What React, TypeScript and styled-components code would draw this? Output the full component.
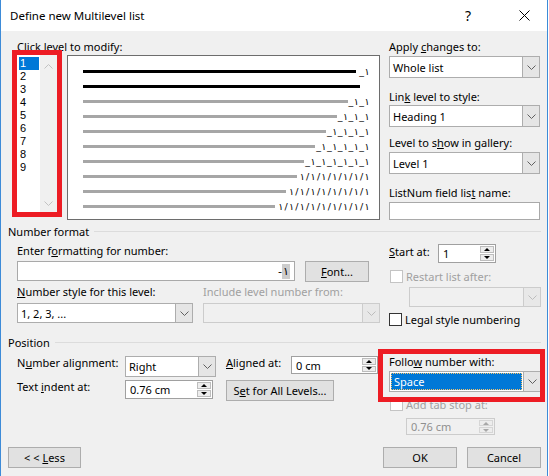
import styled, { createGlobalStyle } from "styled-components";

const GlobalStyle = createGlobalStyle`
  html, body {
    margin: 0;
    padding: 0;
    background: #ffffff;
  }
  body {
    font-family: "Segoe UI", "Noto Sans", "Open Sans", sans-serif;
    font-size: 11px;
    color: #000;
  }
  * {
    box-sizing: border-box;
  }
`;

const Window = styled.div`
  position: relative;
  width: 548px;
  height: 476px;
  border-left: 1px solid #3d8bd8;
  border-right: 1px solid #3d8bd8;
  background: #f0f0f0;
  overflow: hidden;
`;

const TitleBar = styled.div`
  display: flex;
  align-items: center;
  height: 31px;
  background: #ffffff;
  padding-left: 9px;
`;

const Title = styled.div`
  flex: 1;
  font-size: 11.5px;
`;

const CaptionButton = styled.div<{ $mr?: number }>`
  width: 46px;
  height: 31px;
  margin-right: ${(p) => p.$mr ?? 0}px;
  display: flex;
  align-items: center;
  justify-content: center;
  font-size: 14px;
`;

const TopSection = styled.div`
  display: grid;
  grid-template-columns: 368px 151px;
  column-gap: 9px;
  padding: 3px 0 0 11px;
`;

const Column = styled.div`
  display: flex;
  flex-direction: column;
  align-items: flex-start;
`;

const Label = styled.div<{ $mt?: number; $ml?: number; $w?: number; $disabled?: boolean }>`
  height: 13px;
  line-height: 13px;
  white-space: nowrap;
  margin-top: ${(p) => p.$mt ?? 0}px;
  margin-left: ${(p) => p.$ml ?? 0}px;
  width: ${(p) => (p.$w ? `${p.$w}px` : "auto")};
  flex-shrink: 0;
  color: ${(p) => (p.$disabled ? "#a0a0a0" : "#000")};
`;

const ClickLabel = styled(Label)`
  height: 10px;
`;

const LevelRow = styled.div`
  display: flex;
  align-items: flex-start;
  gap: 5px;
`;

const RedFrame = styled.div`
  width: 50px;
  height: 167px;
  border: 5px solid #ed1c24;
  display: flex;
  background: #fff;
`;

const LevelItems = styled.div`
  width: 23px;
  padding-top: 2px;
`;

const LevelItem = styled.div<{ $selected?: boolean }>`
  height: 13px;
  line-height: 13px;
  font-family: "Liberation Sans", Arial, sans-serif;
  font-size: 11px;
  margin-left: 2px;
  width: 20px;
  padding-left: 1px;
  background: ${(p) => (p.$selected ? "#0078d7" : "transparent")};
  color: ${(p) => (p.$selected ? "#fff" : "#000")};
`;

const ScrollTrack = styled.div`
  width: 17px;
  background: #f0f0f0;
  display: flex;
  flex-direction: column;
  align-items: center;
  justify-content: space-between;
  padding: 9px 0 6px;
`;

const Preview = styled.div`
  margin-top: 5px;
  width: 313px;
  height: 165px;
  border: 1px solid #6d6d6d;
  background: #fff;
  padding: 8px 9px 0 15px;
  display: flex;
  flex-direction: column;
`;

const PreviewRow = styled.div`
  height: 15px;
  display: flex;
  align-items: center;
  justify-content: space-between;
`;

const PreviewLine = styled.div<{ $dark: boolean }>`
  height: 3px;
  background: ${(p) => (p.$dark ? "#000" : "#a6a6a6")};
`;

const PreviewNum = styled.div`
  display: flex;
  height: 15px;
  align-items: center;
`;

const Glyph = styled.span<{ $w: number }>`
  display: inline-block;
  width: ${(p) => p.$w}px;
  text-align: center;
  font-family: "DejaVu Sans", sans-serif;
  font-size: 9.5px;
  line-height: 12px;
`;

const ComboBox = styled.div<{ $w: number; $h?: number; $mt?: number; $ml?: number; $disabled?: boolean }>`
  display: flex;
  flex-shrink: 0;
  width: ${(p) => p.$w}px;
  height: ${(p) => p.$h ?? 21}px;
  margin-top: ${(p) => p.$mt ?? 0}px;
  margin-left: ${(p) => p.$ml ?? 0}px;
  border: 1px solid ${(p) => (p.$disabled ? "#cccccc" : "#adadad")};
  background: ${(p) => (p.$disabled ? "#f0f0f0" : "#fff")};
`;

const ComboText = styled.div<{ $selected?: boolean }>`
  flex: 1;
  display: flex;
  align-items: center;
  padding-left: 3px;
  margin: ${(p) => (p.$selected ? "1px" : "0")};
  background: ${(p) => (p.$selected ? "#0078d7" : "transparent")};
  color: ${(p) => (p.$selected ? "#fff" : "#000")};
  outline: ${(p) => (p.$selected ? "1px dotted #f5c26b" : "none")};
  outline-offset: -1px;
  white-space: nowrap;
`;

const ComboArrow = styled.div<{ $disabled?: boolean }>`
  width: 17px;
  display: flex;
  align-items: center;
  justify-content: center;
  border-left: 1px solid ${(p) => (p.$disabled ? "#cccccc" : "#adadad")};
  background: ${(p) => (p.$disabled ? "#e8e8e8" : "#e5e5e5")};
`;

const TextBox = styled.div<{ $w: number; $h: number; $mt?: number }>`
  width: ${(p) => p.$w}px;
  height: ${(p) => p.$h}px;
  margin-top: ${(p) => p.$mt ?? 0}px;
  border: 1px solid #a9a9a9;
  background: #fff;
  display: flex;
  align-items: center;
  justify-content: flex-end;
  padding-right: 4px;
`;

const FormatText = styled.span`
  font-family: "DejaVu Sans", sans-serif;
  font-size: 11px;
  direction: ltr;
  unicode-bidi: bidi-override;
`;

const Marked = styled.span`
  background: #cccccc;
  padding: 1px 1px;
`;

const SpinBox = styled.div<{ $w: number; $h: number; $mt?: number; $ml?: number; $disabled?: boolean }>`
  display: flex;
  flex-shrink: 0;
  width: ${(p) => p.$w}px;
  height: ${(p) => p.$h}px;
  margin-top: ${(p) => p.$mt ?? 0}px;
  margin-left: ${(p) => p.$ml ?? 0}px;
  border: 1px solid ${(p) => (p.$disabled ? "#cccccc" : "#a0a0a0")};
  background: ${(p) => (p.$disabled ? "#f0f0f0" : "#fff")};
  color: ${(p) => (p.$disabled ? "#8f8f8f" : "#000")};
`;

const SpinValue = styled.div`
  flex: 1;
  display: flex;
  align-items: center;
  padding-left: 4px;
  white-space: nowrap;
`;

const SpinButtons = styled.div`
  width: 16px;
  display: flex;
  flex-direction: column;
  padding: 1px;
  gap: 1px;
`;

const SpinButton = styled.div<{ $disabled?: boolean }>`
  flex: 1;
  display: flex;
  align-items: center;
  justify-content: center;
  background: #ededed;
  border: 1px solid ${(p) => (p.$disabled ? "#d6d6d6" : "#bdbdbd")};
`;

const Triangle = styled.div<{ $down?: boolean; $disabled?: boolean }>`
  width: 0;
  height: 0;
  border-left: 3.5px solid transparent;
  border-right: 3.5px solid transparent;
  ${(p) =>
    p.$down
      ? `border-top: 3px solid ${p.$disabled ? "#a8a8a8" : "#000"};`
      : `border-bottom: 3px solid ${p.$disabled ? "#a8a8a8" : "#000"};`}
`;

const Button = styled.button<{ $w: number; $h?: number }>`
  width: ${(p) => p.$w}px;
  height: ${(p) => p.$h ?? 21}px;
  flex-shrink: 0;
  border: 1px solid #adadad;
  background: #e1e1e1;
  font: inherit;
  font-size: 11px;
  color: #000;
  padding: 0;
  white-space: nowrap;
`;

const CheckRow = styled.div<{ $mt?: number; $ml?: number }>`
  display: flex;
  align-items: center;
  gap: 3px;
  height: 13px;
  margin-top: ${(p) => p.$mt ?? 0}px;
  margin-left: ${(p) => p.$ml ?? 0}px;
`;

const CheckBox = styled.div<{ $disabled?: boolean }>`
  width: 13px;
  height: 13px;
  border: 1px solid ${(p) => (p.$disabled ? "#c4c4c4" : "#333333")};
  background: #fff;
  flex-shrink: 0;
`;

const GroupHeader = styled.div<{ $mt: number }>`
  display: flex;
  align-items: center;
  gap: 5px;
  height: 16px;
  margin-top: ${(p) => p.$mt}px;
  padding: 0 6px 0 7px;
  white-space: nowrap;
`;

const GroupLine = styled.div`
  flex: 1;
  height: 1px;
  background: #dcdcdc;
`;

const SectionGrid = styled.div`
  display: grid;
  grid-template-columns: 363px 151px;
  column-gap: 9px;
  padding-left: 16px;
  align-items: start;
`;

const Row = styled.div<{ $mt?: number; $gap?: number }>`
  display: flex;
  align-items: flex-start;
  gap: ${(p) => p.$gap ?? 0}px;
  margin-top: ${(p) => p.$mt ?? 0}px;
`;

const FieldPair = styled.div`
  display: grid;
  grid-template-columns: 176px 177px;
  column-gap: 10px;
  margin-top: 3px;
`;

const PositionGrid = styled.div`
  display: grid;
  grid-template-columns: 108px 101px 65px 87px;
  row-gap: 3px;
  align-items: start;
  margin-top: 6px;
`;

const SpanTwo = styled.div`
  grid-column: 3 / span 2;
`;

const Footer = styled.div`
  display: flex;
  justify-content: space-between;
  margin-top: 12px;
  padding: 0 6px 0 7px;
`;

const FooterGroup = styled.div`
  display: flex;
  gap: 10px;
`;

const RedOverlay = styled.div`
  position: absolute;
  left: 377px;
  top: 349px;
  width: 167px;
  height: 53px;
  border: 5px solid #ed1c24;
  pointer-events: none;
`;

function Chevron({ up, color }: { up?: boolean; color: string }) {
  return (
    <svg width="9" height="5" viewBox="0 0 9 5">
      <polyline
        points={up ? "0.5,4.5 4.5,0.5 8.5,4.5" : "0.5,0.5 4.5,4.5 8.5,0.5"}
        fill="none"
        stroke={color}
        strokeWidth="1"
      />
    </svg>
  );
}

interface ComboProps {
  w: number;
  h?: number;
  mt?: number;
  ml?: number;
  value?: string;
  disabled?: boolean;
  selected?: boolean;
}

function Combo({ w, h, mt, ml, value, disabled, selected }: ComboProps) {
  return (
    <ComboBox $w={w} $h={h} $mt={mt} $ml={ml} $disabled={disabled}>
      <ComboText $selected={selected}>{value}</ComboText>
      <ComboArrow $disabled={disabled}>
        <Chevron color={disabled ? "#bcbcbc" : "#606060"} />
      </ComboArrow>
    </ComboBox>
  );
}

interface SpinProps {
  w: number;
  h: number;
  mt?: number;
  ml?: number;
  value: string;
  disabled?: boolean;
}

function Spin({ w, h, mt, ml, value, disabled }: SpinProps) {
  return (
    <SpinBox $w={w} $h={h} $mt={mt} $ml={ml} $disabled={disabled}>
      <SpinValue>{value}</SpinValue>
      <SpinButtons>
        <SpinButton $disabled={disabled}>
          <Triangle $disabled={disabled} />
        </SpinButton>
        <SpinButton $disabled={disabled}>
          <Triangle $down $disabled={disabled} />
        </SpinButton>
      </SpinButtons>
    </SpinBox>
  );
}

// number as drawn in the preview: "_١" pairs, or "١/١/..." for the deep levels
function levelNumber(depth: number): string[] {
  if (depth === 0) return [];
  if (depth < 7) return Array.from({ length: depth }, () => ["_", "١"]).flat();
  const out: string[] = [];
  for (let i = 0; i < depth; i++) {
    if (i > 0) out.push("/");
    out.push("١");
  }
  return out;
}

const glyphWidth = (g: string) => (g === "١" ? 5.8 : 5);

const levels = ["1", "2", "3", "4", "5", "6", "7", "8", "9"];

const previewRows = [
  { w: 273, dark: true, depth: 1 },
  { w: 277, dark: true, depth: 0 },
  { w: 265, dark: false, depth: 2 },
  { w: 254, dark: false, depth: 3 },
  { w: 243, dark: false, depth: 4 },
  { w: 232, dark: false, depth: 5 },
  { w: 221, dark: false, depth: 6 },
  { w: 214, dark: false, depth: 7 },
  { w: 203, dark: false, depth: 8 },
  { w: 192, dark: false, depth: 9 },
];

export default function App() {
  return (
    <>
      <GlobalStyle />
      <Window>
        <TitleBar>
          <Title>Define new Multilevel list</Title>
          <CaptionButton $mr={10}>?</CaptionButton>
          <CaptionButton>
            <svg width="11" height="11" viewBox="0 0 11 11">
              <path d="M0.5 0.5 L10.5 10.5 M10.5 0.5 L0.5 10.5" stroke="#000" strokeWidth="1" />
            </svg>
          </CaptionButton>
        </TitleBar>

        <TopSection>
          <Column>
            <ClickLabel $mt={6} $ml={5}>
              Click level to modify:
            </ClickLabel>
            <LevelRow>
              <RedFrame>
                <LevelItems>
                  {levels.map((l, i) => (
                    <LevelItem key={l} $selected={i === 0}>
                      {l}
                    </LevelItem>
                  ))}
                </LevelItems>
                <ScrollTrack>
                  <Chevron up color="#c2c2c2" />
                  <Chevron color="#c2c2c2" />
                </ScrollTrack>
              </RedFrame>
              <Preview>
                {previewRows.map((r, i) => (
                  <PreviewRow key={i}>
                    <PreviewLine $dark={r.dark} style={{ width: r.w }} />
                    {r.depth > 0 && (
                      <PreviewNum>
                        {levelNumber(r.depth).map((g, j) => (
                          <Glyph key={j} $w={glyphWidth(g)}>
                            {g}
                          </Glyph>
                        ))}
                      </PreviewNum>
                    )}
                  </PreviewRow>
                ))}
              </Preview>
            </LevelRow>
          </Column>

          <Column>
            <Label $mt={6}>
              Apply <u>c</u>hanges to:
            </Label>
            <Combo w={151} h={22} mt={3} value="Whole list" />
            <Label $mt={12}>
              Lin<u>k</u> level to style:
            </Label>
            <Combo w={151} h={22} mt={2} value="Heading 1" />
            <Label $mt={9}>
              Level to s<u>h</u>ow in gallery:
            </Label>
            <Combo w={151} h={22} mt={3} value="Level 1" />
            <Label $mt={12}>
              ListNum field lis<u>t</u> name:
            </Label>
            <TextBox $w={151} $h={18} $mt={3} />
          </Column>
        </TopSection>

        <GroupHeader $mt={3}>
          Number format
          <GroupLine />
        </GroupHeader>

        <SectionGrid>
          <Column>
            <Label $mt={5}>
              Enter f<u>o</u>rmatting for number:
            </Label>
            <Row $mt={4} $gap={10}>
              <TextBox $w={278} $h={20}>
                <FormatText>
                  -<Marked>١</Marked>
                </FormatText>
              </TextBox>
              <Button $w={64}>
                <u>F</u>ont...
              </Button>
            </Row>
            <FieldPair>
              <Column>
                <Label>
                  <u>N</u>umber style for this level:
                </Label>
                <Combo w={176} h={20} mt={5} value="1, 2, 3, ..." />
              </Column>
              <Column>
                <Label $disabled>Include level number from:</Label>
                <Combo w={177} h={20} mt={5} disabled />
              </Column>
            </FieldPair>
          </Column>

          <Column>
            <Row $mt={5}>
              <Label $w={49} $mt={1}>
                <u>S</u>tart at:
              </Label>
              <Spin w={58} h={19} value="1" />
            </Row>
            <CheckRow $mt={7} $ml={1}>
              <CheckBox $disabled />
              <Label $disabled>Restart list after:</Label>
            </CheckRow>
            <Combo w={132} h={20} mt={4} ml={20} disabled />
            <CheckRow $mt={6}>
              <CheckBox />
              <Label>
                Le<u>g</u>al style numbering
              </Label>
            </CheckRow>
          </Column>
        </SectionGrid>

        <GroupHeader $mt={8}>
          Position
          <GroupLine />
        </GroupHeader>

        <SectionGrid>
          <PositionGrid>
            <Label>
              N<u>u</u>mber alignment:
            </Label>
            <Combo w={91} h={21} value="Right" />
            <Label>
              <u>A</u>ligned at:
            </Label>
            <Spin w={87} h={18} value="0 cm" />
            <Label>
              Text <u>i</u>ndent at:
            </Label>
            <Spin w={88} h={19} value="0.76 cm" />
            <SpanTwo>
              <Button $w={108}>
                S<u>e</u>t for All Levels...
              </Button>
            </SpanTwo>
          </PositionGrid>

          <Column>
            <Label $mt={5}>
              Follo<u>w</u> number with:
            </Label>
            <Combo w={152} h={21} mt={3} value="Space" selected />
            <CheckRow $mt={6} $ml={1}>
              <CheckBox $disabled />
              <Label $disabled>Add tab stop at:</Label>
            </CheckRow>
            <Spin w={89} h={17} mt={7} ml={17} value="0.76 cm" disabled />
          </Column>
        </SectionGrid>

        <Footer>
          <Button $w={73}>
            &lt; &lt; <u>L</u>ess
          </Button>
          <FooterGroup>
            <Button $w={74}>OK</Button>
            <Button $w={74}>Cancel</Button>
          </FooterGroup>
        </Footer>

        <RedOverlay />
      </Window>
    </>
  );
}
